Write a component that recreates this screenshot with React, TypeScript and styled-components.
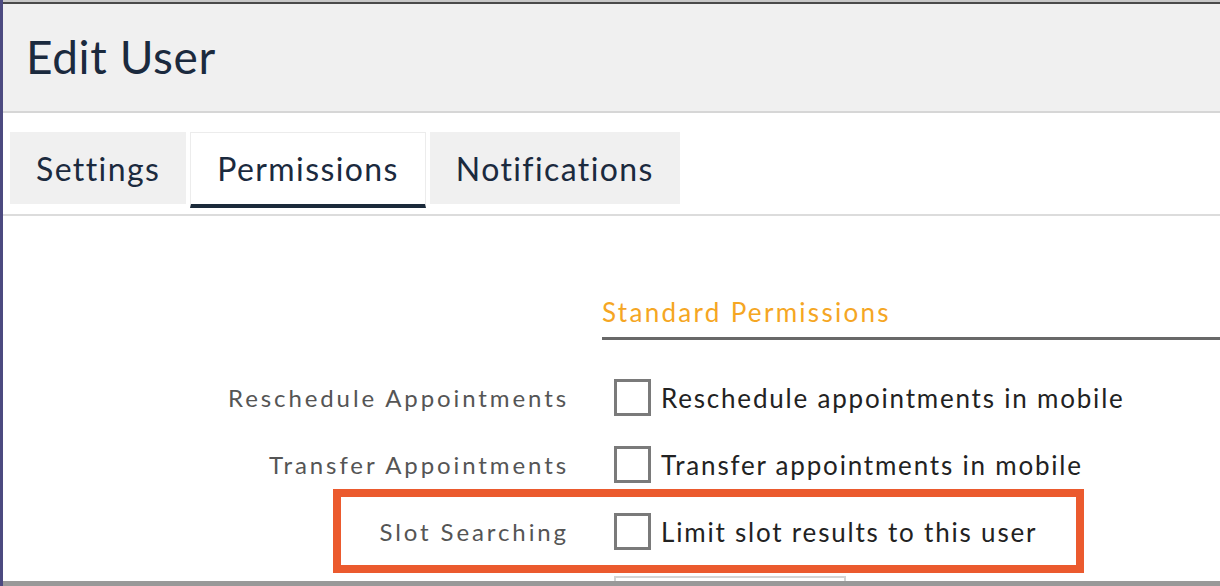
import React from 'react';
import styled, { createGlobalStyle } from 'styled-components';

const GlobalStyle = createGlobalStyle`
  html, body {
    margin: 0;
    padding: 0;
    background: #ffffff;
    overflow: hidden;
  }
  body {
    font-family: Lato, "Noto Sans", sans-serif;
  }
`;

const Page = styled.div`
  display: flex;
  flex-direction: column;
  height: 586px;
  border-left: 3px solid #4c4a80;
  box-sizing: border-box;
`;

const TopEdge = styled.div`
  height: 2px;
  border-top: 2px solid #c8c8c8;
  background: #4a4a4a;
`;

const Header = styled.div`
  display: flex;
  align-items: center;
  height: 109px;
  padding-left: 23px;
  padding-bottom: 2px;
  background: #f0f0f0;
  border-bottom: 2px solid #d6d6d6;
  box-sizing: border-box;
`;

const Title = styled.h1`
  margin: 0;
  font-size: 46px;
  font-weight: 400;
  color: #1b2a3e;
  letter-spacing: 0.6px;
`;

const TabBar = styled.div`
  display: flex;
  align-items: flex-start;
  gap: 4px;
  padding: 19px 0 6px 7px;
  border-bottom: 2px solid #dcdcdc;
`;

const Tab = styled.div<{ $active?: boolean }>`
  display: flex;
  align-items: center;
  height: ${p => (p.$active ? '76px' : '72px')};
  padding: 0 26px;
  box-sizing: border-box;
  font-size: 32px;
  letter-spacing: 1.4px;
  color: #1b2a3e;
  background: ${p => (p.$active ? '#ffffff' : '#f0f0f0')};
  border: ${p => (p.$active ? '1px solid #ececec' : 'none')};
  border-bottom: ${p => (p.$active ? '4px solid #1b2a3a' : 'none')};
`;

const Content = styled.div`
  flex: 1;
  overflow: hidden;
  padding-top: 80px;
`;

const Section = styled.div`
  margin-left: 599px;
`;

const SectionTitle = styled.div`
  font-size: 26px;
  letter-spacing: 2.3px;
  color: #f5a623;
  padding-bottom: 9px;
  border-bottom: 3px solid #686868;
`;

const Rows = styled.div`
  display: flex;
  flex-direction: column;
  gap: 30px;
  padding-top: 39px;
`;

const Row = styled.div`
  position: relative;
  display: flex;
  align-items: center;
  height: 37px;
`;

const Label = styled.div`
  width: 566px;
  text-align: right;
  font-size: 24px;
  letter-spacing: 2.9px;
  color: #555555;
  white-space: nowrap;
`;

const Box = styled.span`
  display: inline-block;
  width: 37px;
  height: 37px;
  margin-left: 45px;
  border: 3px solid #7a7a7a;
  box-sizing: border-box;
  flex-shrink: 0;
`;

const OptionText = styled.span`
  margin-left: 10px;
  font-size: 26px;
  letter-spacing: 1.8px;
  color: #222222;
  white-space: nowrap;
`;

const Highlight = styled.div`
  position: absolute;
  left: 330px;
  top: -24px;
  width: 751px;
  height: 84px;
  border: 8px solid #eb5a2e;
  box-sizing: border-box;
  pointer-events: none;
`;

const ButtonStub = styled.div`
  margin: 26px 0 0 611px;
  width: 232px;
  height: 40px;
  border: 2px solid #d4d4d4;
  box-sizing: border-box;
`;

const BottomBar = styled.div`
  height: 5px;
  background: #999999;
`;

const rows = [
  { label: 'Reschedule Appointments', text: 'Reschedule appointments in mobile' },
  { label: 'Transfer Appointments', text: 'Transfer appointments in mobile' },
  { label: 'Slot Searching', text: 'Limit slot results to this user', highlight: true },
];

export default function App() {
  return (
    <>
      <GlobalStyle />
      <Page>
        <TopEdge />
        <Header>
          <Title>Edit User</Title>
        </Header>
        <TabBar>
          <Tab>Settings</Tab>
          <Tab $active>Permissions</Tab>
          <Tab>Notifications</Tab>
        </TabBar>
        <Content>
          <Section>
            <SectionTitle>Standard Permissions</SectionTitle>
          </Section>
          <Rows>
            {rows.map(r => (
              <Row key={r.label}>
                <Label>{r.label}</Label>
                <Box />
                <OptionText>{r.text}</OptionText>
                {r.highlight && <Highlight />}
              </Row>
            ))}
          </Rows>
          <ButtonStub />
        </Content>
        <BottomBar />
      </Page>
    </>
  );
}
